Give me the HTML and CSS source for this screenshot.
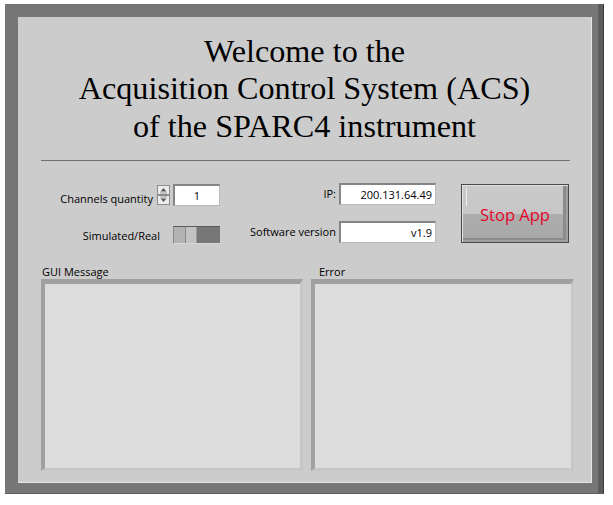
FILE: index.html
```html
<!DOCTYPE html>
<html>
<head>
<meta charset="utf-8">
<title>ACS</title>
<link rel="stylesheet" href="styles.css">
</head>
<body>
<div class="window">
  <div class="panel">
    <h1 class="title">Welcome to the<br>Acquisition Control System (ACS)<br>of the SPARC4 instrument</h1>
    <div class="sep"></div>
    <div class="controls">
      <div class="col-a">
        <div class="row">
          <span class="lbl lbl-bottom lbl-chan">Channels quantity</span>
          <svg class="spin" width="13" height="20" viewBox="0 0 13 20">
            <rect x="0.5" y="0.5" width="12" height="9" fill="#ececec" stroke="#8c8c8c"/>
            <path d="M3.5 6.5 L6.5 3 L9.5 6.5 Z" fill="#5a5a5a"/>
            <line x1="3" y1="8" x2="10" y2="8" stroke="#9a9a9a"/>
            <rect x="0.5" y="10.5" width="12" height="9" fill="#ececec" stroke="#8c8c8c"/>
            <path d="M3.5 13.5 L6.5 17 L9.5 13.5 Z" fill="#5a5a5a"/>
            <line x1="3" y1="12" x2="10" y2="12" stroke="#9a9a9a"/>
          </svg>
          <div class="num num-small">1</div>
        </div>
        <div class="row">
          <span class="lbl lbl-sim">Simulated/Real</span>
          <div class="toggle"><span class="t1"></span><span class="t2"></span><span class="t3"></span></div>
        </div>
      </div>
      <div class="col-b">
        <div class="row">
          <span class="lbl lbl-b">IP:</span>
          <div class="num num-wide">200.131.64.49</div>
        </div>
        <div class="row">
          <span class="lbl lbl-b">Software version</span>
          <div class="num num-wide">v1.9</div>
        </div>
      </div>
      <button class="stop">Stop App</button>
    </div>
    <div class="messages">
      <div class="msg msg-gui">
        <div class="mlabel">GUI Message</div>
        <div class="mbox"></div>
      </div>
      <div class="msg msg-err">
        <div class="mlabel">Error</div>
        <div class="mbox"></div>
      </div>
    </div>
  </div>
</div>
</body>
</html>
```
FILE: styles.css
```css
html, body {
  margin: 0;
  padding: 0;
  background: #ffffff;
}

.window {
  margin: 4px 0 0 5px;
  width: 599px;
  height: 490px;
  box-sizing: border-box;
  background: #767676;
  padding: 13px 0 0 13px;
  border-right: 1px solid #3a3a3a;
  border-bottom: 1px solid #5e5e5e;
  box-shadow: inset -5px 0 0 #5c5c5c;
}

.panel {
  width: 573px;
  height: 465px;
  background: #cccccc;
  border-right: 1px solid #e6e6e6;
  border-bottom: 1px solid #e6e6e6;
  display: flex;
  flex-direction: column;
}

.title {
  margin: 0;
  padding-top: 15.5px;
  font-family: "Liberation Serif", "Times New Roman", serif;
  font-weight: 400;
  font-size: 32.2px;
  line-height: 37.5px;
  text-align: center;
  color: #000;
}

.sep {
  margin: 14.5px 21px 0 23px;
  height: 1px;
  background: #727272;
}

.controls {
  display: flex;
  margin-top: 22px;
  font-family: "Open Sans", "Noto Sans", sans-serif;
  font-size: 11px;
  color: #000;
}

.col-a {
  width: 202px;
  padding-top: 1px;
  display: flex;
  flex-direction: column;
  gap: 18px;
}

.col-b {
  width: 216px;
  display: flex;
  flex-direction: column;
  gap: 16px;
}

.row {
  height: 22px;
  display: flex;
  justify-content: flex-end;
  align-items: center;
}

.lbl {
  line-height: 14px;
  white-space: nowrap;
}

.lbl-bottom {
  align-self: flex-end;
}

.lbl-chan {
  margin-right: 4px;
}

.lbl-sim {
  margin-right: 13px;
  margin-top: 2px;
}

.lbl-b {
  margin-right: 3px;
}

.spin {
  display: block;
  margin-right: 3px;
  margin-top: 1px;
}

.num {
  box-sizing: border-box;
  height: 22px;
  background: #ffffff;
  border-style: solid;
  border-width: 2px 1px 1px 2px;
  border-color: #858585 #b8b8b8 #b8b8b8 #858585;
  line-height: 19px;
  color: #000;
  white-space: nowrap;
}

.num-small {
  width: 47px;
  text-align: center;
}

.num-wide {
  width: 97px;
  text-align: right;
  padding-right: 3px;
}

.toggle {
  width: 47px;
  height: 18px;
  box-sizing: border-box;
  display: flex;
  border-top: 1px solid #5a5a5a;
  border-left: 1px solid #8a8a8a;
  border-bottom: 1px solid #d8d8d8;
}

.toggle .t1 {
  width: 11px;
  background: #b2b2b2;
  border-right: 1px solid #8c8c8c;
}

.toggle .t2 {
  width: 10px;
  background: #c2c2c2;
  border-right: 1px solid #9a9a9a;
}

.toggle .t3 {
  flex: 1;
  background: #777777;
}

.stop {
  position: relative;
  width: 108px;
  height: 59px;
  margin: 1px 0 0 25px;
  padding: 3px 0 0 0;
  box-sizing: border-box;
  border: 1px solid #4a4a4a;
  background: linear-gradient(to bottom, #cacaca 0%, #c6c6c6 50%, #adadad 51%, #a8a8a8 100%);
  box-shadow: inset 1px 1px 0 #e2e2e2, inset -2px -2px 0 #a0a0a0, inset -5px -4px 0 #8c8c8c;
  font-family: "Open Sans", "Noto Sans", sans-serif;
  font-size: 16.5px;
  color: #e4062a;
  text-align: center;
}

.stop::before {
  content: "";
  position: absolute;
  left: 4px;
  top: 3px;
  width: 1px;
  height: 18px;
  background: #eeeeee;
}

.messages {
  display: flex;
  gap: 8px;
  margin: 19px 0 0 23px;
  font-family: "Open Sans", "Noto Sans", sans-serif;
  font-size: 11px;
  color: #000;
}

.msg-gui {
  width: 262px;
}

.msg-err {
  width: 263px;
}

.mlabel {
  line-height: 14px;
  white-space: nowrap;
}

.msg-gui .mlabel {
  padding-left: 1px;
}

.msg-err .mlabel {
  padding-left: 8px;
}

.mbox {
  height: 192px;
  box-sizing: border-box;
  background: #dcdcdc;
  border-style: solid;
  border-width: 5px 3px 3px 4px;
  border-color: #a0a0a0 #c6c6c6 #c6c6c6 #a0a0a0;
}
```
